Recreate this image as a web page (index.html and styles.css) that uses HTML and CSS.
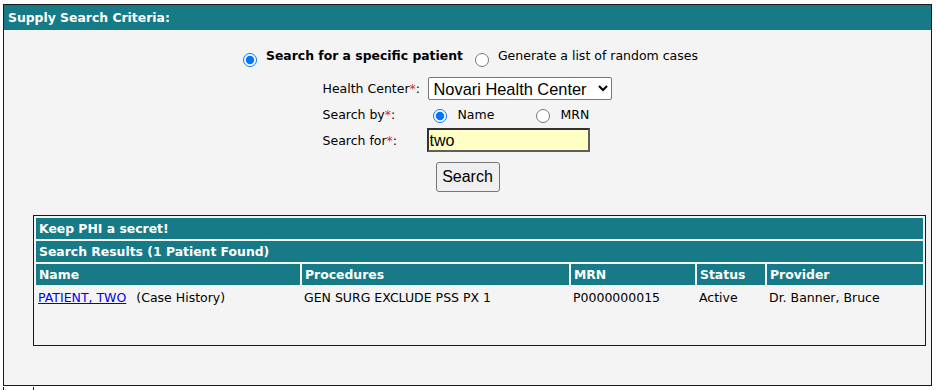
FILE: index.html
```html
<!DOCTYPE html>
<html>
<head>
<meta charset="utf-8">
<title>Supply Search Criteria</title>
<link rel="stylesheet" href="styles.css">
</head>
<body>
<div class="panel">
  <div class="panel-head">Supply Search Criteria:</div>
  <div class="panel-body">
    <div class="mode-row">
      <label class="mode mode-on"><input type="radio" name="mode" checked><span>Search for a specific patient</span></label>
      <label class="mode mode-off"><input type="radio" name="mode"><span>Generate a list of random cases</span></label>
    </div>
    <div class="form">
      <div class="lbl">Health Center<span class="req">*</span>:</div>
      <div class="ctl">
        <select class="sel"><option>Novari Health Center</option></select>
      </div>
      <div class="lbl lbl-mid">Search by<span class="req">*</span>:</div>
      <div class="ctl by">
        <label class="opt opt-name"><input type="radio" name="by" checked><span>Name</span></label>
        <label class="opt"><input type="radio" name="by"><span>MRN</span></label>
      </div>
      <div class="lbl">Search for<span class="req">*</span>:</div>
      <div class="ctl">
        <input class="txt" type="text" value="two">
      </div>
    </div>
    <div class="btn-row"><button class="btn">Search</button></div>

    <div class="results">
      <table class="res">
        <tr><td class="bar" colspan="5">Keep PHI a secret!</td></tr>
        <tr><td class="bar" colspan="5">Search Results (1 Patient Found)</td></tr>
        <tr class="hdr">
          <th class="c-name">Name</th>
          <th class="c-proc">Procedures</th>
          <th class="c-mrn">MRN</th>
          <th class="c-stat">Status</th>
          <th class="c-prov">Provider</th>
        </tr>
        <tr class="data">
          <td><a href="#">PATIENT, TWO</a><span class="hist">(Case History)</span></td>
          <td>GEN SURG EXCLUDE PSS PX 1</td>
          <td>P0000000015</td>
          <td>Active</td>
          <td>Dr. Banner, Bruce</td>
        </tr>
      </table>
    </div>
  </div>
</div>
<div class="below"><div class="below-inner"></div></div>
</body>
</html>
```
FILE: styles.css
```css
html, body {
  margin: 0;
  padding: 0;
  background: #ffffff;
}
body {
  font-family: "DejaVu Sans", Verdana, sans-serif;
  font-size: 12.5px;
  color: #000;
}
.panel {
  margin: 4px 4px 0 3px;
  border: 1px solid #1a1a1a;
  background: #f4f4f4;
  height: 382px;
  box-sizing: border-box;
}
.panel-head {
  background: #167b87;
  color: #fff;
  font-weight: bold;
  font-size: 12.4px;
  height: 25px;
  line-height: 25px;
  padding-left: 4px;
}
.panel-body {
  padding-top: 17px;
}
.mode-row {
  display: flex;
  justify-content: center;
  align-items: flex-start;
  height: 24px;
  padding-left: 6px;
}
.mode {
  display: flex;
  align-items: flex-start;
}
.mode span {
  line-height: 18px;
}
.mode input {
  width: 14px;
  height: 14px;
  margin: 6px 9px 0 0;
}
.mode-on span { font-weight: bold; font-size: 12.4px; }
.mode-off { margin-left: 12px; }
.form {
  display: grid;
  grid-template-columns: 105px 185px;
  grid-template-rows: 23px 22px 24px;
  row-gap: 3px;
  width: 290px;
  margin: 6px auto 0;
}
.lbl {
  display: flex;
  align-items: center;
}
.lbl-mid { padding-top: 1px; }
.req { color: #e22; }
.ctl {
  display: flex;
  align-items: center;
}
.sel {
  font-family: "Liberation Sans", Arial, sans-serif;
  font-size: 16.4px;
  width: 184px;
  height: 23px;
  border: 1px solid #767676;
  border-radius: 2px;
  background: #fff;
  color: #000;
  padding: 0 1px;
  margin: 0;
}
.opt {
  display: flex;
  align-items: center;
}
.opt input {
  width: 14px;
  height: 14px;
  margin: 4px 11px 0 5px;
}
.opt-name { width: 103px; }
.txt {
  font-family: "Liberation Sans", Arial, sans-serif;
  font-size: 16px;
  width: 163px;
  height: 24px;
  box-sizing: border-box;
  border: 2px solid #3b3b3b;
  border-color: #333 #5e5e5e #5e5e5e #333;
  background: #ffffc6;
  padding: 1px 1px 0;
  margin: 0 0 0 -1px;
  outline: none;
}
.btn-row {
  display: flex;
  justify-content: center;
  margin-top: 10px;
}
.btn {
  font-family: "Liberation Sans", Arial, sans-serif;
  font-size: 16px;
  height: 30px;
  width: 64px;
  padding: 0;
  background: #efefef;
  border: 1px solid #767676;
  border-radius: 3px;
  color: #000;
}
.results {
  margin: 23px 5px 0 29px;
  border: 1px solid #1a1a1a;
  height: 131px;
  box-sizing: border-box;
  padding: 0;
}
.res {
  width: 100%;
  border-collapse: separate;
  border-spacing: 2px;
  font-size: 12.5px;
}
.bar, .hdr th {
  background: #167b87;
  color: #fff;
  font-weight: bold;
  font-size: 12.4px;
  text-align: left;
  height: 21px;
  padding: 0 0 0 3px;
  box-sizing: border-box;
}
.c-name { width: 264px; }
.c-proc { width: 267px; }
.c-mrn { width: 124px; }
.c-stat { width: 68px; }
.data td {
  padding: 3px 0 0 2px;
  height: 20px;
  vertical-align: top;
}
.data a {
  color: #0000ee;
  text-decoration: underline;
}
.hist { padding-left: 10px; }
.below {
  margin: 1px 0 0 3px;
  height: 6px;
  border-left: 1px solid #1a1a1a;
  padding-left: 29px;
}
.below-inner {
  height: 6px;
  border-left: 1px solid #1a1a1a;
}
```
